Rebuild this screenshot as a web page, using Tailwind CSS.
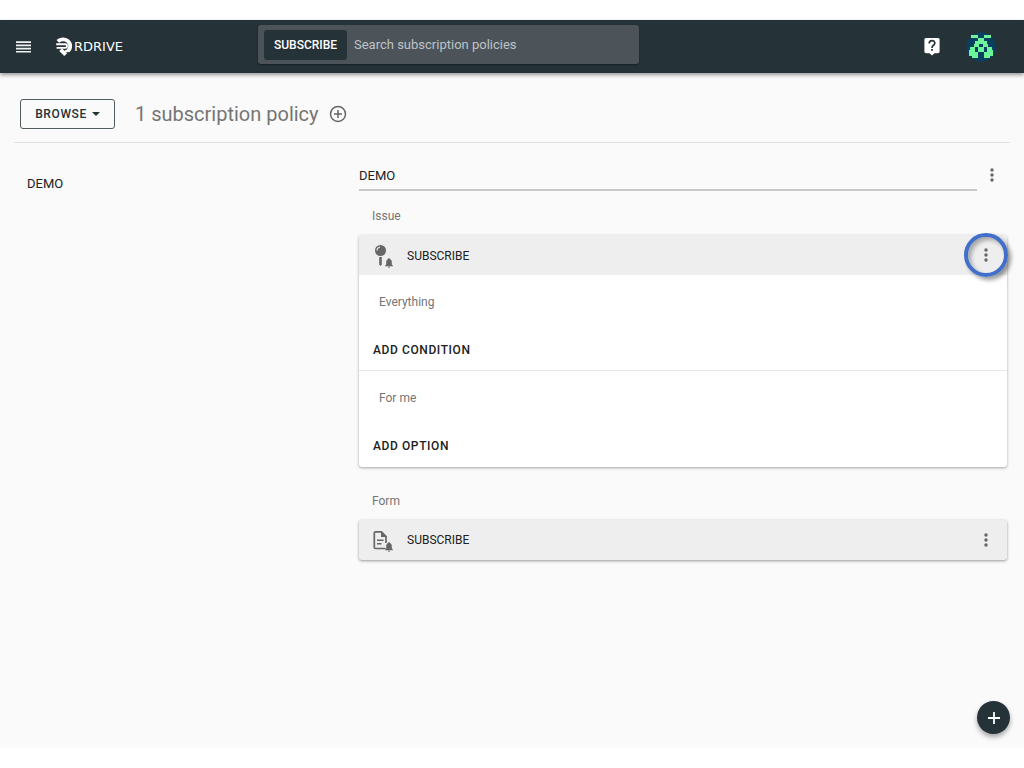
<!DOCTYPE html>
<html lang="en">
<head>
<meta charset="utf-8">
<meta name="viewport" content="width=device-width, initial-scale=1">
<title>RDrive – Subscription policies</title>
<script src="https://cdn.jsdelivr.net/npm/@tailwindcss/browser@4"></script>
</head>
<body class="flex min-h-screen flex-col bg-white py-5 font-['Roboto',sans-serif] text-[#212121]">
<svg class="hidden" aria-hidden="true">
  <symbol id="dots" viewBox="0 0 4 14"><circle cx="2" cy="2" r="1.7"/><circle cx="2" cy="7" r="1.7"/><circle cx="2" cy="12" r="1.7"/></symbol>
  <symbol id="bell" viewBox="0 0 8 10"><path d="M4 0c.5 0 .8.4.8.9C6.200 1.300 6.800 2.500 6.800 4v2.500L8 7.800v.5H0v-.5l1.200-1.300V4C1.200 2.500 1.800 1.300 3.200.9 3.200.4 3.500 0 4 0zM3 8.800h2c0 .6-.4 1-1 1s-1-.4-1-1z"/></symbol>
</svg>
<header class="z-10 flex h-[53px] shrink-0 items-center bg-[#253338] pr-7 pl-4 text-white shadow-[0_2px_4px_rgba(0,0,0,0.4)]">
  <div class="flex w-[242px] items-center gap-6">
    <button type="button" aria-label="Menu" class="flex h-6 w-4 items-center">
      <svg class="h-3 w-4" viewBox="0 0 16 12" fill="#f1f3f2"><path d="M0 .3h15v1.700H0zM0 3.500h15v1.700H0zM0 6.700h15v1.700H0zM0 9.900h15v1.700H0z"/></svg>
    </button>
    <a href="#" class="flex items-center gap-px">
      <svg class="h-5 w-[17px]" viewBox="0 0 17 20" fill="none" stroke="#fff">
        <path stroke-width="3.800" d="M1.800 4.300C4.500 1.800 9 1.800 11.500 3.700c3.600 2.800 3.600 8 .2 10.300"/>
        <path stroke-width="1.900" d="M.2 7.300h9.300c2 0 2 3.600 0 3.600H.6"/>
        <path stroke-width="3.800" d="M4.600 12.600l5 5.200"/>
        <path stroke-width="2.500" d="M8.600 14.600c1.400 0 3-.6 4.200-1.800"/>
      </svg>
      <span class="font-['DejaVu_Sans',sans-serif] text-[13px] leading-5">RDRIVE</span>
    </a>
  </div>
  <form class="mb-1 flex h-[39px] w-[381px] items-center gap-[7px] rounded-[3px] bg-[#4c545a] px-1.5 shadow-[0_1px_2px_rgba(0,0,0,0.4)]">
    <button type="button" class="h-[30px] w-[83px] shrink-0 rounded-[3px] bg-[#253338] text-xs font-medium">SUBSCRIBE</button>
    <input type="search" aria-label="Search subscription policies" placeholder="Search subscription policies" class="min-w-0 flex-1 bg-transparent text-[13px] text-white outline-none placeholder:text-[#bfc3c5]">
  </form>
  <div class="ml-auto flex items-center gap-[26px]">
    <button type="button" aria-label="Help">
      <svg class="h-[19px] w-4" viewBox="0 0 16 19"><path fill="#fff" d="M2 1h12a1.600 1.600 0 0 1 1.600 1.600v12A1.600 1.600 0 0 1 14 16.200h-3.500L8 18.600l-2.500-2.400H2A1.600 1.600 0 0 1 .4 14.600v-12A1.600 1.600 0 0 1 2 1z"/><path fill="none" stroke="#253338" stroke-width="1.700" d="M5.200 6.500C5.200 2.600 10.800 2.600 10.800 6.200 10.800 8.200 8 8.300 8 10.900"/><path fill="#253338" d="M7.100 12h1.800v1.800H7.100z"/></svg>
    </button>
    <button type="button" aria-label="Account">
      <svg class="size-[30px]" viewBox="0 0 30 30"><circle cx="15" cy="15" r="14.500" fill="#0b3f60"/><path fill="#6cf59a" d="M5 3h7v3H5zM18 3h7v3h-7zM12 6h6v3h-6zM9 9h12v3H9zM8 12h5v3H8zM17 12h5v3h-5zM12 15h6v5h-6zM4 15h5v3H4zM21 15h5v3h-5zM3 18h6v6H3zM21 18h6v6h-6zM9 20h3v6H6v-3h3zM18 20h3v3h3v3h-6z"/></svg>
    </button>
  </div>
</header>

<main class="relative flex flex-1 flex-col bg-[#fafafa] px-3.5">
  <div class="flex h-[70px] items-center border-b border-[#e2e3e3] pt-3 pr-4 pl-1.5">
    <button type="button" class="flex h-[30px] w-[95px] items-center justify-center gap-[5px] rounded-[3px] border border-[#505b5f] text-xs font-medium tracking-wider text-[#253338]">BROWSE
      <svg class="h-1 w-2" viewBox="0 0 8 4" fill="#253338"><path d="M0 0h8L4 4z"/></svg>
    </button>
    <h1 class="ml-5 text-xl text-[#757575]">1 subscription policy</h1>
    <button type="button" aria-label="Add policy" class="ml-2.5">
      <svg class="size-[18px]" viewBox="0 0 18 18" fill="none" stroke="#656565" stroke-width="1.500"><circle cx="9" cy="9" r="7.500"/><path d="M9 5v8M5 9h8"/></svg>
    </button>
  </div>

  <div class="flex">
    <nav class="w-[345px] shrink-0 pt-[31px] pl-[13px] text-[13px] leading-5"><a href="#">DEMO</a></nav>
    <div class="mr-[3px] min-w-0 flex-1 pt-4">
      <div class="flex items-center">
        <input type="text" aria-label="Policy name" value="DEMO" class="h-8 min-w-0 flex-1 border-b-2 border-[#c8c9c9] pt-0.5 text-[13px] outline-none">
        <button type="button" aria-label="Policy actions" class="ml-[7px] flex h-8 w-[23px] items-center"><svg class="h-3.5 w-4" fill="#666"><use href="#dots"/></svg></button>
      </div>

      <h2 class="mt-[15px] ml-[13px] text-xs leading-5 text-[#757575]">Issue</h2>
      <section class="mt-[9px] rounded-[3px] bg-white shadow-[0_1px_3px_rgba(0,0,0,0.35)]">
        <div class="flex h-10 items-center rounded-t-[3px] bg-[#eee] pl-3.5">
          <svg class="mt-1 h-6 w-5" viewBox="0 0 20 24" fill="#666"><circle cx="7.500" cy="5.500" r="5.500"/><path d="M6.200 12h2.600v7.500l-1.300 1.500-1.300-1.500z"/><path d="M4 5.500A3.400 3.400 0 0 1 7 2.200" fill="none" stroke="#ddd" stroke-width="1.200"/><use href="#bell" x="12" y="13" width="8" height="10"/></svg>
          <h3 class="ml-3.5 pt-px text-xs">SUBSCRIBE</h3>
          <button type="button" aria-label="Issue subscription actions" class="-mr-px ml-auto flex size-11 items-center justify-center rounded-full border-4 border-[#416fc9] shadow-[3px_3px_4px_rgba(0,0,0,0.4),inset_3px_3px_4px_rgba(0,0,0,0.3)]"><svg class="h-3.5 w-4" fill="#666"><use href="#dots"/></svg></button>
        </div>
        <div class="h-24 border-b border-[#e6e6e6] px-3.5">
          <p class="pt-[17px] pl-1.5 text-xs leading-5 text-[#757575]">Everything</p>
          <button type="button" class="mt-7 block text-xs leading-5 font-medium tracking-wider">ADD CONDITION</button>
        </div>
        <div class="h-24 px-3.5">
          <p class="pt-[17px] pl-1.5 text-xs leading-5 text-[#757575]">For me</p>
          <button type="button" class="mt-7 block text-xs leading-5 font-medium tracking-wider">ADD OPTION</button>
        </div>
      </section>

      <h2 class="mt-6 ml-[13px] text-xs leading-5 text-[#757575]">Form</h2>
      <section class="mt-[9px] flex h-10 items-center rounded-[3px] bg-[#eee] pl-3.5 shadow-[0_1px_3px_rgba(0,0,0,0.4)]">
        <svg class="mt-1 h-6 w-5" viewBox="0 0 20 24" fill="#666"><path fill="none" stroke="#666" stroke-width="1.700" d="M12.500 18.500H2.500A1.200 1.200 0 0 1 1.300 17.300V3A1.200 1.200 0 0 1 2.500 1.800H8.500L13 6.500V13"/><path d="M8 1l6 6H8z"/><path d="M4 9.500h6.500v1.500H4zM4 13h4.500v1.500H4z"/><use href="#bell" x="12" y="12" width="8" height="10"/></svg>
        <h3 class="ml-3.5 text-xs">SUBSCRIBE</h3>
        <button type="button" aria-label="Form subscription actions" class="-mr-px ml-auto flex h-10 w-11 items-center justify-center"><svg class="h-3.5 w-4" fill="#666"><use href="#dots"/></svg></button>
      </section>
    </div>
  </div>

  <button type="button" aria-label="Create" class="absolute right-3.5 bottom-3.5 flex size-[33px] items-center justify-center rounded-full bg-[#253338] shadow-[0_3px_5px_rgba(0,0,0,0.35)]">
    <svg class="size-3" viewBox="0 0 12 12" fill="none" stroke="#fff" stroke-width="1.800"><path d="M6 0v12M0 6h12"/></svg>
  </button>
</main>
</body>
</html>
